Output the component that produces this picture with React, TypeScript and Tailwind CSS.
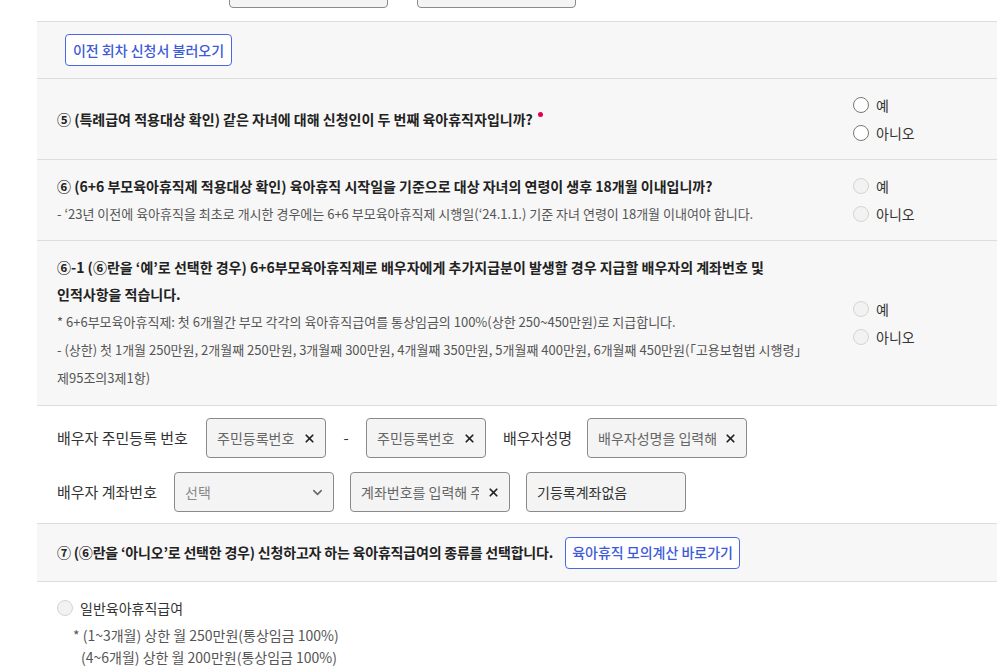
import { ChevronDown, X } from "lucide-react";

// 육아휴직 급여 신청서 — 배우자/특례 확인 항목 부분

function Radio({ label, disabled }: { label: string; disabled?: boolean }) {
  return (
    <label className="flex h-[28px] items-center gap-[7px]">
      <span
        className={`h-[16px] w-[16px] shrink-0 rounded-full border ${
          disabled ? "border-[#d4d4d4] bg-[#f2f2f2]" : "border-[#777] bg-white"
        }`}
      />
      <span className="text-[14px] text-[#333]">{label}</span>
    </label>
  );
}

function YesNo({ disabled }: { disabled?: boolean }) {
  return (
    <div className="flex w-[144px] shrink-0 flex-col">
      <Radio label="예" disabled={disabled} />
      <Radio label="아니오" disabled={disabled} />
    </div>
  );
}

function Field({ placeholder, width }: { placeholder: string; width: string }) {
  return (
    <div className={`flex h-[40px] ${width} items-center gap-2 rounded-[4px] border border-[#8a8a8a] bg-[#f4f4f4] pl-[10px] pr-[9px]`}>
      <span className="min-w-0 flex-1 overflow-hidden whitespace-nowrap text-[14px] text-[#666]">{placeholder}</span>
      <X className="h-[13px] w-[13px] shrink-0 text-[#222]" strokeWidth={3.2} />
    </div>
  );
}

export default function App() {
  return (
    <div className="h-[667px] w-[1007px] overflow-hidden bg-white font-['Noto_Sans_CJK_KR','Noto_Sans',sans-serif] text-[#222]">
      <div className="ml-[37px] w-[960px]">
        {/* 이전 항목 입력칸 (잘려 보임) */}
        <div className="h-[22px] overflow-hidden border-b border-[#ddd]">
          <div className="-mt-[32px] flex gap-[29px] pl-[192px]">
            <div className="h-[40px] w-[159px] rounded-[4px] border border-[#8a8a8a] bg-[#f4f4f4]" />
            <div className="h-[40px] w-[159px] rounded-[4px] border border-[#8a8a8a] bg-[#f4f4f4]" />
          </div>
        </div>

        <div className="flex h-[57px] items-center border-b border-[#ddd] bg-[#f7f7f7] pl-[28px]">
          <button type="button" className="h-[32px] w-[167px] rounded-[4px] border border-[#4a67e6] bg-white text-[14px] font-medium text-[#3d5ad8]">
            이전 회차 신청서 불러오기
          </button>
        </div>

        {/* ⑤ */}
        <div className="flex h-[81px] items-center border-b border-[#ddd] bg-[#f7f7f7] pl-5">
          <div className="flex-1 text-[14px] font-bold">
            ⑤ (특례급여 적용대상 확인) 같은 자녀에 대해 신청인이 두 번째 육아휴직자입니까?
            <span className="relative -top-[8px] ml-[5px] inline-block h-[5px] w-[5px] rounded-full bg-[#e4004b]" />
          </div>
          <YesNo />
        </div>

        {/* ⑥ */}
        <div className="flex h-[81px] items-center border-b border-[#ddd] bg-[#f7f7f7] pl-5">
          <div className="flex-1">
            <p className="text-[14px] font-bold leading-[27px]">
              ⑥ (6+6 부모육아휴직제 적용대상 확인) 육아휴직 시작일을 기준으로 대상 자녀의 연령이 생후 18개월 이내입니까?
            </p>
            <p className="text-[13px] leading-[27px] text-[#555]">
              - ‘23년 이전에 육아휴직을 최초로 개시한 경우에는 6+6 부모육아휴직제 시행일(‘24.1.1.) 기준 자녀 연령이 18개월 이내여야 합니다.
            </p>
          </div>
          <YesNo disabled />
        </div>

        {/* ⑥-1 */}
        <div className="flex h-[165px] items-center border-b border-[#ddd] bg-[#f7f7f7] pl-5">
          <div className="flex-1 whitespace-nowrap">
            <p className="text-[14px] font-bold leading-[27px]">
              ⑥-1 (⑥란을 ‘예’로 선택한 경우) 6+6부모육아휴직제로 배우자에게 추가지급분이 발생할 경우 지급할 배우자의 계좌번호 및
              <br />
              인적사항을 적습니다.
            </p>
            <p className="text-[13px] leading-[28px] text-[#555]">
              * 6+6부모육아휴직제: 첫 6개월간 부모 각각의 육아휴직급여를 통상임금의 100%(상한 250~450만원)로 지급합니다.
            </p>
            <p className="text-[13px] leading-[28px] text-[#555]">
              - (상한) 첫 1개월 250만원, 2개월째 250만원, 3개월째 300만원, 4개월째 350만원, 5개월째 400만원, 6개월째 450만원(「고용보험법 시행령」
              <br />
              제95조의3제1항)
            </p>
          </div>
          <YesNo disabled />
        </div>

        {/* 배우자 정보 */}
        <div className="flex flex-col gap-[14px] border-b border-[#ddd] pb-[11px] pl-5 pt-[12px] text-[15px] text-[#333]">
          <div className="flex items-center">
            <span className="w-[149px]">배우자 주민등록 번호</span>
            <Field placeholder="주민등록번호" width="w-[120px]" />
            <span className="w-[40px] text-center">-</span>
            <Field placeholder="주민등록번호" width="w-[120px]" />
            <span className="ml-[17px] w-[84px]">배우자성명</span>
            <Field placeholder="배우자성명을 입력해 주세요" width="w-[160px]" />
          </div>
          <div className="flex items-center gap-4">
            <span className="-mr-4 w-[117px]">배우자 계좌번호</span>
            <div className="flex h-[40px] w-[160px] items-center justify-between rounded-[4px] border border-[#8a8a8a] bg-[#f4f4f4] pl-[10px] pr-[8px]">
              <span className="text-[14px] text-[#888]">선택</span>
              <ChevronDown className="h-[15px] w-[15px] text-[#666]" strokeWidth={2.4} />
            </div>
            <Field placeholder="계좌번호를 입력해 주세요" width="w-[160px]" />
            <div className="flex h-[40px] w-[160px] items-center rounded-[4px] border border-[#8a8a8a] bg-[#f4f4f4] px-[10px] text-[14px] text-[#333]">
              기등록계좌없음
            </div>
          </div>
        </div>

        {/* ⑦ */}
        <div className="flex h-[58px] items-center gap-3 border-b border-[#ddd] bg-[#f7f7f7] pl-5">
          <span className="text-[14px] font-bold tracking-[-0.2px]">
            ⑦ (⑥란을 ‘아니오’로 선택한 경우) 신청하고자 하는 육아휴직급여의 종류를 선택합니다.
          </span>
          <button type="button" className="h-[32px] w-[175px] rounded-[4px] border border-[#4a67e6] bg-white text-[14px] font-medium text-[#3d5ad8]">
            육아휴직 모의계산 바로가기
          </button>
        </div>

        <div className="pl-5 pt-[12px]">
          <Radio label="일반육아휴직급여" disabled />
          <p className="ml-4 mt-[2px] text-[14px] leading-[22px] text-[#555]">* (1~3개월) 상한 월 250만원(통상임금 100%)</p>
          <p className="ml-6 text-[14px] leading-[22px] text-[#555]">(4~6개월) 상한 월 200만원(통상임금 100%)</p>
        </div>
      </div>
    </div>
  );
}
